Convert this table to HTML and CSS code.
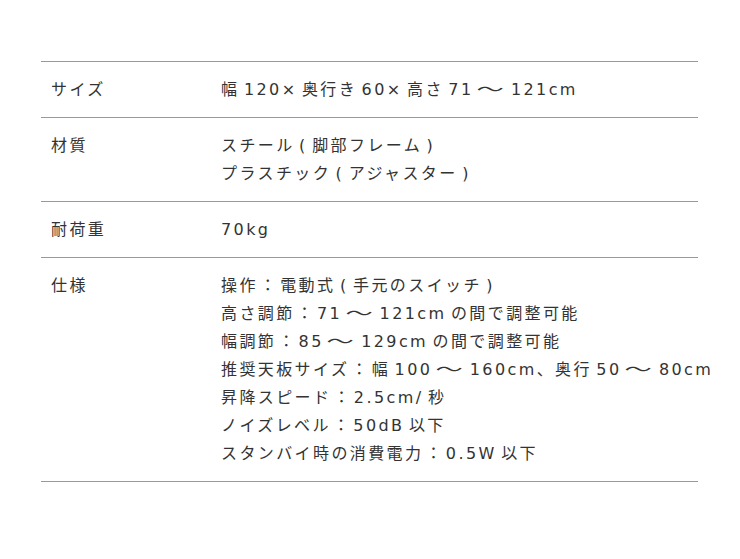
FILE: index.html
```html
<!DOCTYPE html>
<html lang="ja">
<head>
<meta charset="utf-8">
<link rel="stylesheet" href="styles.css">
</head>
<body>
<table class="spec">
  <tr>
    <th>サイズ</th>
    <td>幅 120× 奥行き 60× 高さ 71 <span class="wave">～</span> 121cm</td>
  </tr>
  <tr>
    <th>材質</th>
    <td>スチール ( 脚部フレーム )<br>プラスチック ( アジャスター )</td>
  </tr>
  <tr>
    <th>耐荷重</th>
    <td>70kg</td>
  </tr>
  <tr>
    <th>仕様</th>
    <td>操作<span class="colon">：</span>電動式 ( 手元のスイッチ )<br>高さ調節<span class="colon">：</span>71 <span class="wave">～</span> 121cm の間で調整可能<br>幅調節<span class="colon">：</span>85 <span class="wave">～</span> 129cm の間で調整可能<br>推奨天板サイズ<span class="colon">：</span>幅 100 <span class="wave">～</span> 160cm、奥行 50 <span class="wave">～</span> 80cm<br>昇降スピード<span class="colon">：</span>2.5cm/ 秒<br>ノイズレベル<span class="colon">：</span>50dB 以下<br>スタンバイ時の消費電力<span class="colon">：</span>0.5W 以下</td>
  </tr>
</table>
</body>
</html>
```
FILE: styles.css
```css
html, body {
  margin: 0;
  padding: 0;
  background: #fff;
}
body {
  padding: 61px 42px 0 41px;
  font-family: "DejaVu Sans", "Noto Sans CJK JP", sans-serif;
  color: #333;
}
.spec {
  width: 657px;
  table-layout: fixed;
  border-collapse: collapse;
  border-top: 1px solid #999;
}
.spec tr {
  border-bottom: 1px solid #999;
}
.spec th, .spec td {
  font-size: 16px;
  font-weight: 400;
  line-height: 28px;
  letter-spacing: 2.4px;
  word-spacing: -3px;
  text-align: left;
  vertical-align: top;
  padding: 14px 0 13px;
  white-space: nowrap;
}
.spec th {
  width: 170px;
  padding-left: 10px;
}
.wave {
  display: inline-block;
  transform: scaleX(1.7);
  margin: 0 5px;
}
.colon {
  margin: 0 2px;
}
```
